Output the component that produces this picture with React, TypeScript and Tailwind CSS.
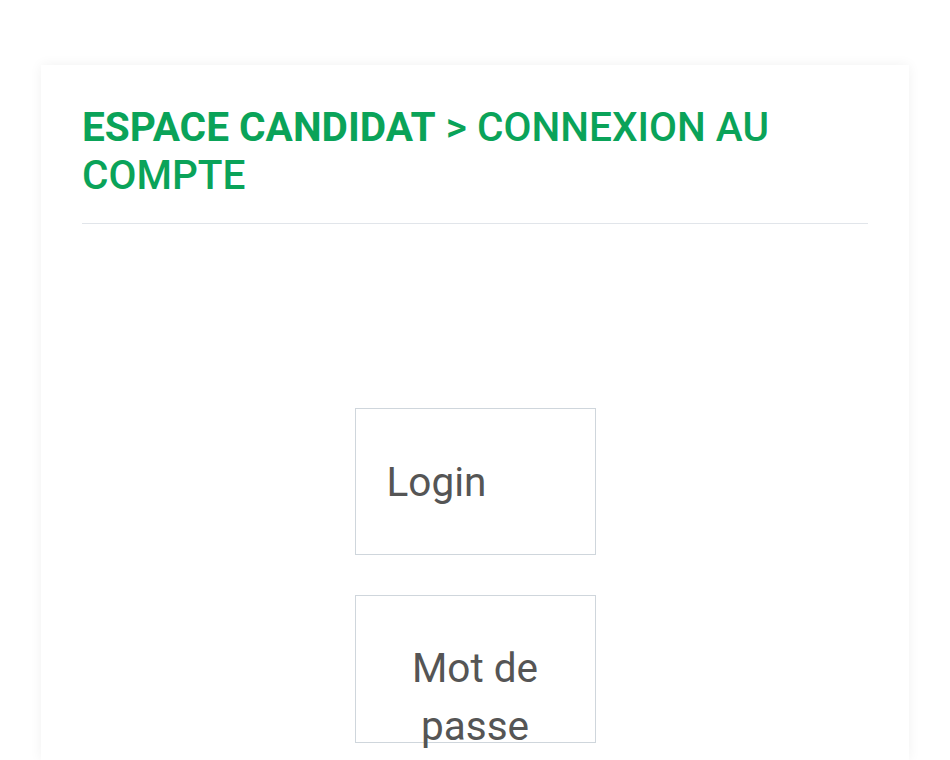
export default function App() {
  return (
    <div className="h-[760px] w-[950px] bg-white overflow-hidden" style={{ fontFamily: "Roboto, 'Noto Sans', sans-serif" }}>
      <div className="pt-[65px] px-[41px]">
        <div className="bg-white shadow-[0_0_12px_rgba(0,0,0,0.06)] px-[41px] pt-[38px] h-[695px]">
          <h1 className="text-[40.6px] leading-[48px] text-[#0aa359] font-medium pb-[24px] border-b border-[#e1e5ea]">
            <span className="font-bold">ESPACE CANDIDAT</span> &gt; CONNEXION AU COMPTE
          </h1>
          <div className="flex flex-col items-center pt-[184px] gap-[40px]">
            <div className="w-[241px] h-[147px] border border-[#cfd6dc] flex items-center pl-[31px] text-[40.5px] text-[#555] leading-[58px]">
              Login
            </div>
            <div className="w-[241px] h-[148px] border border-[#cfd6dc] px-[31px] pt-[43px] text-center text-[40.5px] text-[#555] leading-[58px]">
              Mot de passe
            </div>
          </div>
        </div>
      </div>
    </div>
  );
}
